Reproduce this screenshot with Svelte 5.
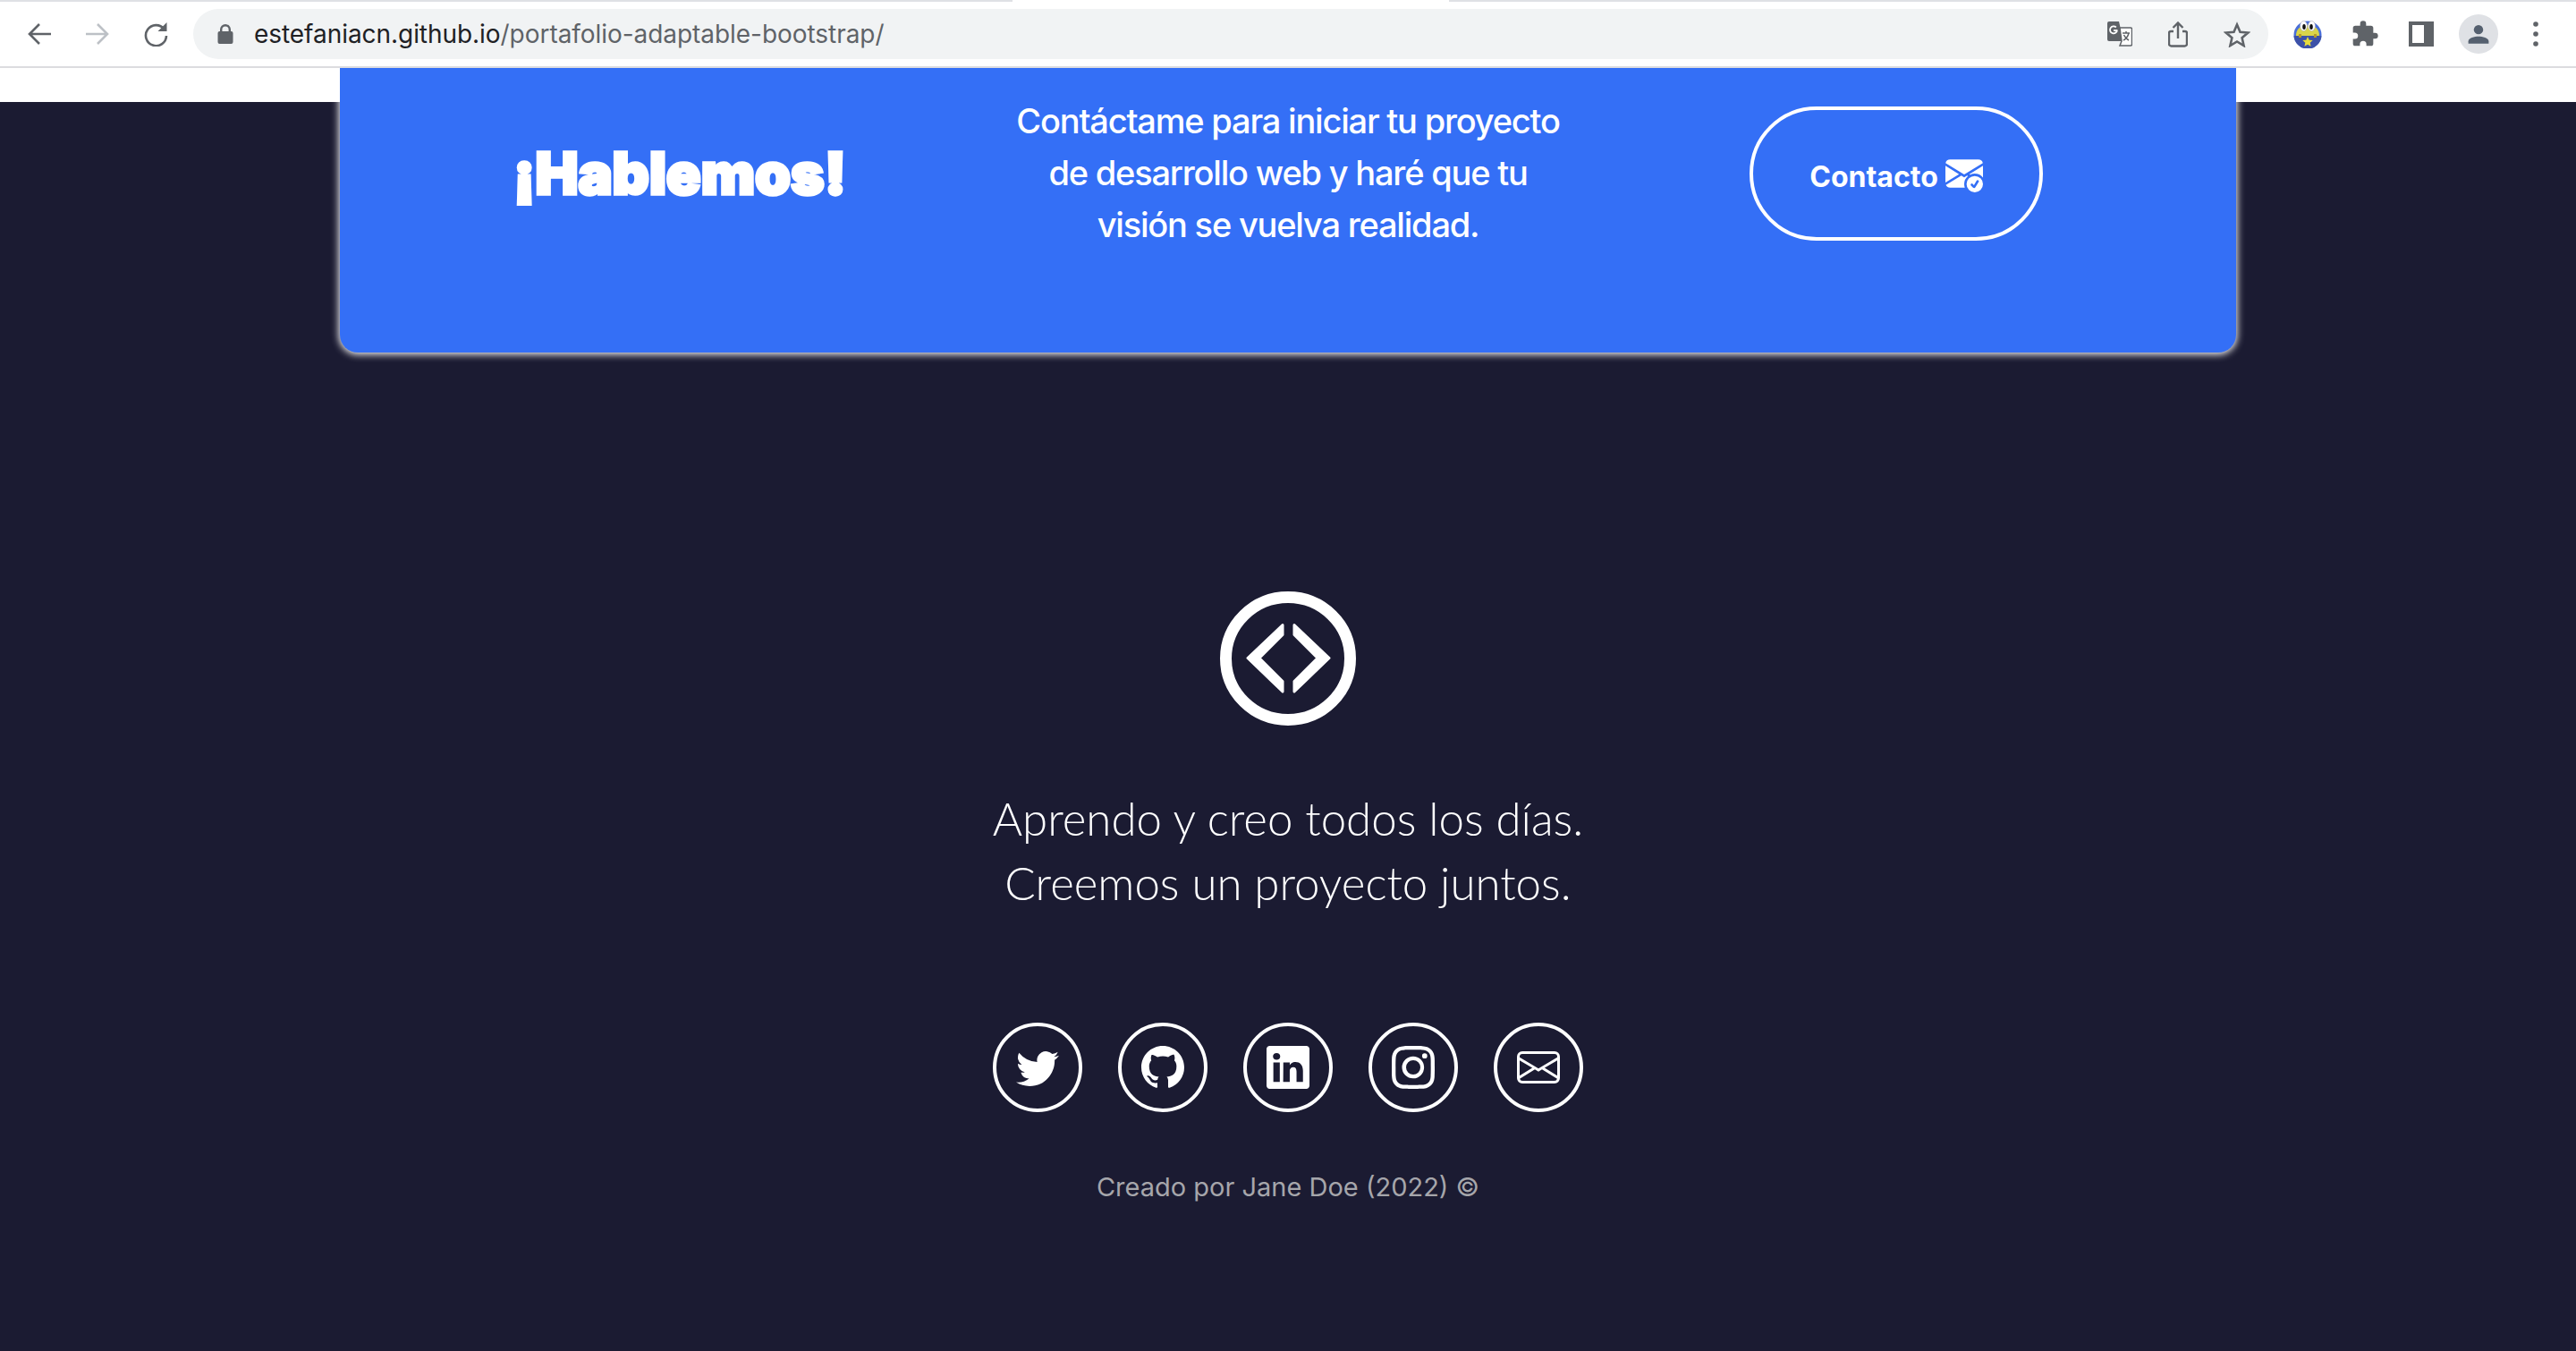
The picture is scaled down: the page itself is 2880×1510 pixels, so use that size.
<script>
	const socials = [
		{
			name: 'twitter',
			paths: [
				'M5.026 15c6.038 0 9.341-5.003 9.341-9.334 0-.14 0-.282-.006-.422A6.685 6.685 0 0 0 16 3.542a6.658 6.658 0 0 1-1.889.518 3.301 3.301 0 0 0 1.447-1.817 6.533 6.533 0 0 1-2.087.793A3.286 3.286 0 0 0 7.875 6.03a9.325 9.325 0 0 1-6.767-3.429 3.289 3.289 0 0 0 1.018 4.382A3.323 3.323 0 0 1 .64 6.575v.045a3.288 3.288 0 0 0 2.632 3.218 3.203 3.203 0 0 1-.865.115 3.23 3.23 0 0 1-.614-.057 3.283 3.283 0 0 0 3.067 2.277A6.588 6.588 0 0 1 .78 13.58a6.32 6.32 0 0 1-.78-.045A9.344 9.344 0 0 0 5.026 15z'
			]
		},
		{
			name: 'github',
			paths: [
				'M8 0C3.58 0 0 3.58 0 8c0 3.54 2.29 6.53 5.47 7.59.4.07.55-.17.55-.38 0-.19-.01-.82-.01-1.49-2.01.37-2.53-.49-2.69-.94-.09-.23-.48-.94-.82-1.13-.28-.15-.68-.52-.01-.53.63-.01 1.08.58 1.23.82.72 1.21 1.87.87 2.33.66.07-.52.28-.87.51-1.07-1.78-.2-3.64-.89-3.64-3.95 0-.87.31-1.59.82-2.15-.08-.2-.36-1.02.08-2.12 0 0 .67-.21 2.2.82.64-.18 1.32-.27 2-.27.68 0 1.36.09 2 .27 1.53-1.04 2.2-.82 2.2-.82.44 1.1.16 1.92.08 2.12.51.56.82 1.27.82 2.15 0 3.07-1.87 3.75-3.65 3.95.29.25.54.73.54 1.48 0 1.07-.01 1.93-.01 2.2 0 .21.15.46.55.38A8.012 8.012 0 0 0 16 8c0-4.42-3.58-8-8-8z'
			]
		},
		{
			name: 'linkedin',
			paths: [
				'M0 1.146C0 .513.526 0 1.175 0h13.65C15.474 0 16 .513 16 1.146v13.708c0 .633-.526 1.146-1.175 1.146H1.175C.526 16 0 15.487 0 14.854V1.146zm4.943 12.248V6.169H2.542v7.225h2.401zm-1.2-8.212c.837 0 1.358-.554 1.358-1.248-.015-.709-.52-1.248-1.342-1.248-.822 0-1.359.54-1.359 1.248 0 .694.521 1.248 1.327 1.248h.016zm4.908 8.212V9.359c0-.216.016-.432.08-.586.173-.431.568-.878 1.232-.878.869 0 1.216.662 1.216 1.634v3.865h2.401V9.25c0-2.22-1.184-3.252-2.764-3.252-1.274 0-1.845.7-2.165 1.193v.025h-.016a5.54 5.54 0 0 1 .016-.025V6.169h-2.4c.03.678 0 7.225 0 7.225h2.4z'
			]
		},
		{
			name: 'instagram',
			paths: [
				'M8 0C5.829 0 5.556.01 4.703.048 3.85.088 3.269.222 2.76.42a3.917 3.917 0 0 0-1.417.923A3.927 3.927 0 0 0 .42 2.76C.222 3.268.087 3.85.048 4.7.01 5.555 0 5.827 0 8.001c0 2.172.01 2.444.048 3.297.04.852.174 1.433.372 1.942.205.526.478.972.923 1.417.444.445.89.719 1.416.923.51.198 1.09.333 1.942.372C5.555 15.99 5.827 16 8 16s2.444-.01 3.298-.048c.851-.04 1.434-.174 1.943-.372a3.916 3.916 0 0 0 1.416-.923c.445-.445.718-.891.923-1.417.197-.509.332-1.09.372-1.942C15.99 10.445 16 10.173 16 8s-.01-2.445-.048-3.299c-.04-.851-.175-1.433-.372-1.941a3.926 3.926 0 0 0-.923-1.417A3.911 3.911 0 0 0 13.24.42c-.51-.198-1.092-.333-1.943-.372C10.443.01 10.172 0 7.998 0h.003zm-.717 1.442h.718c2.136 0 2.389.007 3.232.046.78.035 1.204.166 1.486.275.373.145.64.319.92.599.28.28.453.546.598.92.11.281.24.705.275 1.485.039.843.047 1.096.047 3.231s-.008 2.389-.047 3.232c-.035.78-.166 1.203-.275 1.485a2.47 2.47 0 0 1-.599.919c-.28.28-.546.453-.92.598-.28.11-.704.24-1.485.276-.843.038-1.096.047-3.232.047s-2.39-.009-3.233-.047c-.78-.036-1.203-.166-1.485-.276a2.478 2.478 0 0 1-.92-.598 2.48 2.48 0 0 1-.6-.92c-.109-.281-.24-.705-.275-1.485-.038-.843-.046-1.096-.046-3.233 0-2.136.008-2.388.046-3.231.036-.78.166-1.204.276-1.486.145-.373.319-.64.599-.92.28-.28.546-.453.92-.598.282-.11.705-.24 1.485-.276.738-.034 1.024-.044 2.515-.045v.002zm4.988 1.328a.96.96 0 1 0 0 1.92.96.96 0 0 0 0-1.92zm-4.27 1.122a4.109 4.109 0 1 0 0 8.217 4.109 4.109 0 0 0 0-8.217zm0 1.441a2.667 2.667 0 1 1 0 5.334 2.667 2.667 0 0 1 0-5.334z'
			]
		},
		{
			name: 'envelope',
			paths: [
				'M0 4a2 2 0 0 1 2-2h12a2 2 0 0 1 2 2v8a2 2 0 0 1-2 2H2a2 2 0 0 1-2-2V4Zm2-1a1 1 0 0 0-1 1v.217l7 4.2 7-4.2V4a1 1 0 0 0-1-1H2Zm13 2.383-4.708 2.825L15 11.105V5.383Zm-.034 6.876-5.64-3.471L8 9.583l-1.326-.795-5.64 3.47A1 1 0 0 0 2 13h12a1 1 0 0 0 .966-.741ZM1 11.105l4.708-2.897L1 5.383v5.722Z'
			]
		}
	];
</script>

<div class="tabstrip"><div class="active-tab"></div></div>
<header class="toolbar">
	<svg class="nav" viewBox="0 0 28 28" fill="none" stroke="#5f6368" stroke-width="2.6">
		<path d="M27 14H4M14 3 3 14l11 11" />
	</svg>
	<svg class="nav" viewBox="0 0 28 28" fill="none" stroke="#bdc1c6" stroke-width="2.6">
		<path d="M1 14h23M14 3l11 11-11 11" />
	</svg>
	<svg class="nav reload" viewBox="0 0 28 28" fill="none" stroke="#5f6368" stroke-width="2.6">
		<path d="M23.5 8.5A11.500 11.500 0 1 0 26 16" />
		<path d="M26.500 1v10h-10z" fill="#5f6368" stroke="none" />
	</svg>

	<div class="omnibox">
		<svg class="lock" viewBox="0 0 18 22">
			<path d="M3 8.5V6a6 6 0 0 1 12 0v2.500h-2.400V6a3.600 3.600 0 0 0-7.200 0v2.500z" fill="#5f6368" />
			<rect x="0.500" y="8" width="17" height="14" rx="2" fill="#5f6368" />
		</svg>
		<span class="url"><span class="host">estefaniacn.github.io</span>/portafolio-adaptable-bootstrap/</span>
		<div class="omni-actions">
			<svg class="translate" viewBox="0 0 28 28">
				<path d="M2 0h11l5 22H2a2 2 0 0 1-2-2V2a2 2 0 0 1 2-2z" fill="#5f6368" />
				<path d="M14 7h12a1.500 1.500 0 0 1 1.500 1.500v17a1.500 1.500 0 0 1-1.500 1.500H14l2-5z" fill="#fff" stroke="#5f6368" stroke-width="1.500" />
				<path d="M11 9.500a4 4 0 1 1-1.200-3" fill="none" stroke="#fff" stroke-width="1.800" />
				<path d="M7 10h4" stroke="#fff" stroke-width="1.800" />
				<path d="M17 13h8M21 11v2M24 13c-1 4-4 7-6 8M18.500 15c1 2.500 3 4.500 5.500 6" fill="none" stroke="#5f6368" stroke-width="1.500" />
			</svg>
			<svg class="share" viewBox="0 0 22 29" fill="none" stroke="#5f6368" stroke-width="2.400">
				<path d="M6 11H3a2 2 0 0 0-2 2v12a2.500 2.500 0 0 0 2.500 2.500h15A2.500 2.500 0 0 0 21 25V13a2 2 0 0 0-2-2h-3" />
				<path d="M11 19V2M5.500 7 11 1.500 16.500 7" />
			</svg>
			<svg class="star" viewBox="0 0 30 29" fill="none" stroke="#5f6368" stroke-width="2.600">
				<path d="m15 3.500 3.500 8.200 8.800.8-6.700 5.800 2 8.700L15 22.400 7.400 27l2-8.700-6.700-5.800 8.800-.8z" />
			</svg>
		</div>
	</div>

	<div class="extensions">
		<svg class="ext-avatar" viewBox="0 0 32 32">
			<clipPath id="ext-clip"><circle cx="16" cy="17" r="15.500" /></clipPath>
			<g clip-path="url(#ext-clip)">
				<rect width="32" height="32" fill="#4a6fd8" />
				<path d="M3 18c0-7 4-12 13-12s13 5 13 12z" fill="#d9d44a" />
				<rect y="18" width="32" height="14" fill="#3c51a8" />
			</g>
			<path d="m16 19 1.700 3.700 4 .4-3 2.700.9 4-3.600-2.100-3.600 2.100.9-4-3-2.700 4-.4z" fill="#e8dc3c" />
			<rect x="6" y="16" width="3" height="4" fill="#b59a2a" />
			<rect x="23" y="16" width="3" height="4" fill="#b59a2a" />
			<ellipse cx="11.500" cy="7" rx="4" ry="5.500" fill="#fff" stroke="#99a" stroke-width=".5" />
			<ellipse cx="20.500" cy="7" rx="4" ry="5.500" fill="#fff" stroke="#99a" stroke-width=".5" />
			<ellipse cx="12" cy="8" rx="1.800" ry="3" fill="#111" />
			<ellipse cx="20" cy="8" rx="1.800" ry="3" fill="#111" />
		</svg>
		<svg class="puzzle" viewBox="0 0 24 24" fill="#5f6368">
			<path d="M20.500 11H19V7a2 2 0 0 0-2-2h-4V3.500a2.500 2.500 0 0 0-5 0V5H4a2 2 0 0 0-2 2v3.800h1.500a2.700 2.700 0 0 1 0 5.400H2V20a2 2 0 0 0 2 2h3.800v-1.500a2.700 2.700 0 0 1 5.400 0V22H17a2 2 0 0 0 2-2v-4h1.500a2.500 2.500 0 0 0 0-5z" />
		</svg>
		<svg class="sidebar" viewBox="0 0 28 28">
			<path fill-rule="evenodd" d="M0 0h28v28H0zM4 4v20h13V4z" fill="#5f6368" />
		</svg>
		<div class="profile">
			<svg viewBox="0 0 24 24" fill="#55606f">
				<circle cx="12" cy="7.500" r="4.800" />
				<path d="M1.500 22v-2.500C1.500 16 8 14.500 12 14.500s10.500 1.500 10.500 5V22z" />
			</svg>
		</div>
		<svg class="dots" viewBox="0 0 6 28" fill="#5f6368">
			<circle cx="3" cy="3" r="2.800" />
			<circle cx="3" cy="14" r="2.800" />
			<circle cx="3" cy="25" r="2.800" />
		</svg>
	</div>
</header>

<main class="page">
	<section class="cta">
		<h2>¡Hablemos!</h2>
		<p>Contáctame para iniciar tu proyecto<br />de desarrollo web y haré que tu<br />visión se vuelva realidad.</p>
		<div class="cta-action">
			<button type="button" class="contact">
				Contacto
				<svg viewBox="0 0 16 16" fill="#fff">
					<path d="M.05 3.555A2 2 0 0 1 2 2h12a2 2 0 0 1 1.950 1.555L8 8.414.05 3.555ZM0 4.697v7.104l5.803-3.558L0 4.697ZM6.761 8.830l-6.570 4.026A2 2 0 0 0 2 14h6.256A4.493 4.493 0 0 1 8 12.500a4.490 4.490 0 0 1 1.606-3.446l-.367-.225L8 9.586l-1.239-.757ZM16 4.697v4.974A4.491 4.491 0 0 0 12.500 8a4.490 4.490 0 0 0-1.965.450l-.338-.207L16 4.697Z" />
					<path d="M16 12.500a3.500 3.500 0 1 1-7 0 3.500 3.500 0 0 1 7 0Zm-1.993-1.679a.5.5 0 0 0-.686.172l-1.170 1.950-.547-.547a.5.5 0 0 0-.708.708l.774.773a.75.75 0 0 0 1.174-.144l1.335-2.226a.5.5 0 0 0-.172-.686Z" />
				</svg>
			</button>
		</div>
	</section>

	<footer class="footer">
		<svg class="logo" viewBox="0 0 152 150" fill="none" stroke="#fff">
			<ellipse cx="76" cy="75" rx="69.500" ry="68.500" stroke-width="13" />
			<g fill="#fff" stroke-width="3" stroke-linejoin="round">
				<path d="M70 37.500 31 74.500 70 112V100.500L44 74.500 70 48.500z" />
				<path d="M83 37.500 122 74.500 83 112V100.500L109 74.500 83 48.500z" />
			</g>
		</svg>
		<p class="tagline">Aprendo y creo todos los días.<br />Creemos un proyecto juntos.</p>
		<ul class="socials">
			{#each socials as social}
				<li>
					<a href="#{social.name}" aria-label={social.name}>
						<svg viewBox="0 0 16 16" fill="#fff">
							{#each social.paths as d}
								<path {d} />
							{/each}
						</svg>
					</a>
				</li>
			{/each}
		</ul>
		<p class="credit">Creado por Jane Doe (2022) ©</p>
	</footer>
</main>

<style>
	:global(body) {
		background: #1b1b32;
	}

	.tabstrip {
		height: 2px;
		background: #dfe1e5;
	}

	.active-tab {
		width: 488px;
		height: 2px;
		margin-left: 1132px;
		background: #fff;
	}

	.toolbar {
		display: flex;
		align-items: center;
		height: 74px;
		box-sizing: border-box;
		padding-left: 30px;
		background: #fff;
		border-bottom: 2px solid #dcdcdf;
		font-family: Inter, 'Liberation Sans', sans-serif;
	}

	.nav {
		width: 28px;
		height: 28px;
		margin-right: 37px;
		flex: none;
	}

	.nav.reload {
		margin-right: 28px;
	}

	.omnibox {
		display: flex;
		align-items: center;
		width: 2320px;
		height: 56px;
		box-sizing: border-box;
		padding: 0 20px 0 27px;
		background: #f1f3f4;
		border-radius: 28px;
	}

	.lock {
		width: 18px;
		height: 22px;
		margin-right: 23px;
	}

	.url {
		font-size: 28px;
		letter-spacing: -0.05px;
		color: #5f6368;
		white-space: nowrap;
	}

	.host {
		color: #202124;
	}

	.omni-actions {
		display: flex;
		align-items: center;
		gap: 40px;
		margin-left: auto;
	}

	.translate {
		width: 28px;
		height: 28px;
	}

	.share {
		width: 22px;
		height: 29px;
	}

	.star {
		width: 30px;
		height: 29px;
	}

	.extensions {
		display: flex;
		align-items: center;
		margin-left: 28px;
	}

	.ext-avatar {
		width: 32px;
		height: 32px;
	}

	.puzzle {
		width: 32px;
		height: 32px;
		margin-left: 32px;
	}

	.sidebar {
		width: 28px;
		height: 28px;
		margin-left: 33px;
	}

	.profile {
		display: flex;
		align-items: center;
		justify-content: center;
		width: 44px;
		height: 44px;
		margin-left: 28px;
		background: #dfe1e5;
		border-radius: 50%;
	}

	.profile svg {
		width: 26px;
		height: 26px;
	}

	.dots {
		width: 6px;
		height: 28px;
		margin-left: 39px;
	}

	.page {
		min-height: 1434px;
		background: linear-gradient(#fff 38px, #1b1b32 38px);
		color: #fff;
		font-family: Inter, 'Liberation Sans', sans-serif;
		overflow: hidden;
	}

	.cta {
		display: grid;
		grid-template-columns: repeat(3, 1fr);
		align-items: center;
		width: 2120px;
		box-sizing: border-box;
		margin: 0 auto;
		padding: 30px 40px 114px;
		background: #346ff6;
		border-radius: 0 0 20px 20px;
		box-shadow: 0 1px 8px 1px #fff;
	}

	.cta h2 {
		margin: 0;
		font-size: 64px;
		font-weight: 900;
		text-align: center;
		-webkit-text-stroke: 3.5px #fff;
		letter-spacing: 0;
	}

	.cta p {
		margin: 0;
		font-size: 38px;
		line-height: 58px;
		text-align: center;
		letter-spacing: -1.2px;
		font-weight: 450;
	}

	.cta-action {
		display: flex;
		justify-content: center;
		margin-top: 2px;
	}

	.contact {
		display: flex;
		align-items: center;
		justify-content: center;
		gap: 8px;
		width: 328px;
		height: 150px;
		padding: 6px 0 0;
		background: transparent;
		border: 4px solid #fff;
		border-radius: 75px;
		color: #fff;
		font-family: inherit;
		font-size: 32px;
		font-weight: 700;
	}

	.contact svg {
		width: 42px;
		height: 42px;
		margin-top: -6px;
	}

	.footer {
		display: flex;
		flex-direction: column;
		align-items: center;
		padding-top: 267px;
	}

	.logo {
		width: 152px;
		height: 150px;
	}

	.tagline {
		margin: 68px 0 0;
		font-family: Lato, sans-serif;
		font-size: 51px;
		font-weight: 300;
		line-height: 72px;
		text-align: center;
	}

	.socials {
		display: flex;
		gap: 40px;
		margin: 120px 0 0;
		padding: 0;
		list-style: none;
	}

	.socials a {
		display: flex;
		align-items: center;
		justify-content: center;
		width: 100px;
		height: 100px;
		box-sizing: border-box;
		border: 4px solid #fff;
		border-radius: 50%;
	}

	.socials svg {
		width: 48px;
		height: 48px;
	}

	.credit {
		margin: 66px 0 0;
		font-size: 29px;
		line-height: 36px;
		color: #a6a6ab;
	}
</style>
